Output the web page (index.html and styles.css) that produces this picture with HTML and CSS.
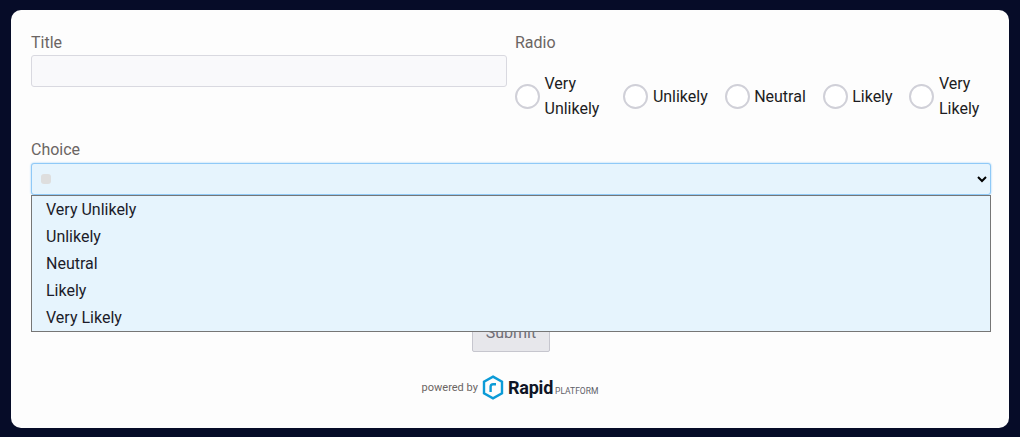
FILE: index.html
```html
<!DOCTYPE html>
<html lang="en">

<head>
    <meta charset="UTF-8">
    <meta name="viewport" content="width=device-width, initial-scale=1.0">
    <title>Form</title>
    <link rel="stylesheet" href="styles.css">
</head>

<body>
    <form class="card">
        <div class="row">
            <div class="field">
                <label class="label" for="title">Title</label>
                <input class="input" id="title" type="text">
            </div>
            <div class="field">
                <span class="label">Radio</span>
                <div class="radios">
                    <label class="radio radio-first"><input type="radio" name="radio"><span>Very Unlikely</span></label>
                    <label class="radio"><input type="radio" name="radio"><span>Unlikely</span></label>
                    <label class="radio"><input type="radio" name="radio"><span>Neutral</span></label>
                    <label class="radio"><input type="radio" name="radio"><span>Likely</span></label>
                    <label class="radio radio-last"><input type="radio" name="radio"><span>Very Likely</span></label>
                </div>
            </div>
        </div>

        <div class="choice">
            <label class="label" for="choice">Choice</label>
            <div class="select-wrap">
                <select class="select" id="choice">
                    <option></option>
                </select>
                <span class="swatch"></span>
                <ul class="menu">
                    <li>Very Unlikely</li>
                    <li>Unlikely</li>
                    <li>Neutral</li>
                    <li>Likely</li>
                    <li>Very Likely</li>
                </ul>
            </div>
        </div>

        <div class="actions">
            <button class="submit" type="button">Submit</button>
        </div>

        <div class="powered">
            <span class="powered-by">powered by</span>
            <svg class="logo" width="22" height="25" viewBox="0 0 22 25">
                <path d="M11 1.6 L20 6.8 V18.2 L11 23.4 L2 18.2 V6.8 Z" fill="none" stroke="#0b9bd7" stroke-width="2.4" />
                <path d="M8.6 17 V11.8 Q8.6 9.2 11.2 9.2 H14" fill="none" stroke="#0b9bd7" stroke-width="2.4" />
            </svg>
            <span class="rapid">Rapid</span>
            <span class="platform">PLATFORM</span>
        </div>
    </form>
</body>

</html>
```

FILE: styles.css
```css
* {
    margin: 0;
    padding: 0;
    box-sizing: border-box;
}

body {
    background-color: #060c28;
    padding: 10px 11px 9px;
    font-family: Roboto, "Liberation Sans", sans-serif;
}

.card {
    height: 418px;
    padding: 23px 18px 0 20px;
    background-color: #fdfdfd;
    border-radius: 10px;
}

.row {
    display: grid;
    grid-template-columns: 476px 1fr;
    column-gap: 8px;
}

.label {
    display: block;
    height: 22px;
    font-size: 16px;
    line-height: 20px;
    color: #6b6563;
}

.input {
    display: block;
    width: 100%;
    height: 32px;
    background-color: #f9f9fb;
    border: 1px solid #d9d9e0;
    border-radius: 3px;
}

.radios {
    display: flex;
    justify-content: space-between;
    align-items: center;
    margin-top: 16px;
    padding-right: 7px;
}

.radio {
    display: flex;
    align-items: center;
    font-size: 16px;
    line-height: 25px;
    color: #1c1c22;
}

.radio input {
    appearance: none;
    flex: none;
    width: 25px;
    height: 25px;
    margin-right: 4.5px;
    background-color: #fff;
    border: 2px solid #d0d0d8;
    border-radius: 50%;
}

.radio-first span {
    width: 62px;
}

.radio-last span {
    width: 45px;
}

.choice {
    margin-top: 19px;
}

.select-wrap {
    position: relative;
    margin-top: 1px;
}

.select {
    display: block;
    width: 100%;
    height: 32px;
    background-color: #e6f4fd;
    border: 1px solid #8fc9f7;
    border-radius: 3px;
    box-shadow: 0 0 2px #8fc9f7;
    outline: none;
}

.swatch {
    position: absolute;
    left: 10px;
    top: 11px;
    width: 10px;
    height: 10px;
    background-color: #dedede;
    border-radius: 3px;
}

.menu {
    position: absolute;
    left: 0;
    right: 0;
    top: 32px;
    height: 137px;
    list-style: none;
    background-color: #e6f4fd;
    border: 1px solid #767676;
    font-size: 16px;
    color: #1c1c2a;
    z-index: 1;
}

.menu li {
    height: 27px;
    padding-left: 14px;
    line-height: 27px;
}

.actions {
    display: flex;
    justify-content: center;
    margin-top: 120px;
}

.submit {
    width: 78px;
    height: 37px;
    padding-bottom: 2px;
    background-color: #e7e7eb;
    border: 1px solid #c6c6ce;
    border-radius: 2px;
    font-family: inherit;
    font-size: 16px;
    color: #6f6f78;
}

.powered {
    display: flex;
    justify-content: center;
    align-items: center;
    margin-top: 22px;
    padding-right: 2px;
    height: 26px;
}

.powered-by {
    margin-right: 4px;
    font-size: 11px;
    color: #6b6563;
}

.logo {
    margin-right: 4px;
}

.rapid {
    font-size: 18px;
    font-weight: 700;
    letter-spacing: -0.2px;
    color: #0f1526;
}

.platform {
    margin: 7px 0 0 2px;
    font-size: 8.5px;
    color: #5d6068;
}
```
